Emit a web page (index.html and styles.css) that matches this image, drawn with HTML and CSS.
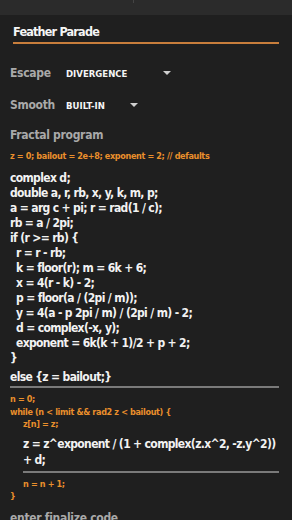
FILE: index.html
```html
<!DOCTYPE html>
<html>
<head>
<meta charset="utf-8">
<link rel="stylesheet" href="styles.css">
</head>
<body>
<div class="topbar"><span class="notch"></span></div>
<div class="page">
  <div class="title">Feather Parade</div>
  <div class="field escape">
    <span class="label">Escape</span>
    <span class="select sel-div">DIVERGENCE<span class="caret"></span></span>
  </div>
  <div class="field smooth">
    <span class="label">Smooth</span>
    <span class="select sel-bi">BUILT-IN<span class="caret"></span></span>
  </div>
  <div class="section">Fractal program</div>
  <div class="orange defaults">z = 0; bailout = 2e+8; exponent = 2; // defaults</div>
  <div class="code">
    <div class="ln">complex d;</div>
    <div class="ln">double a, r, rb, x, y, k, m, p;</div>
    <div class="ln">a = arg c + pi; r = rad(1 / c);</div>
    <div class="ln">rb = a / 2pi;</div>
    <div class="ln">if (r &gt;= rb) {</div>
    <div class="ln ind">r = r - rb;</div>
    <div class="ln ind">k = floor(r); m = 6k + 6;</div>
    <div class="ln ind">x = 4(r - k) - 2;</div>
    <div class="ln ind">p = floor(a / (2pi / m));</div>
    <div class="ln ind">y = 4(a - p 2pi / m) / (2pi / m) - 2;</div>
    <div class="ln ind">d = complex(-x, y);</div>
    <div class="ln ind">exponent = 6k(k + 1)/2 + p + 2;</div>
    <div class="ln">}</div>
    <div class="ln else">else {z = bailout;}</div>
  </div>
  <div class="loop">
    <div class="orange ol">n = 0;</div>
    <div class="orange ol">while (n &lt; limit &amp;&amp; rad2 z &lt; bailout) {</div>
    <div class="inner">
      <div class="orange ol">z[n] = z;</div>
      <div class="user">
        <div class="uln">z = z^exponent / (1 + complex(z.x^2, -z.y^2))</div>
        <div class="uln">+ d;</div>
      </div>
      <div class="orange ol inc">n = n + 1;</div>
    </div>
    <div class="orange ol">}</div>
  </div>
  <div class="section finalize">enter finalize code</div>
</div>
</body>
</html>
```
FILE: styles.css
```css
html, body {
  margin: 0;
  padding: 0;
  background: #1f1f1f;
  height: 100%;
  overflow: hidden;
}
body {
  font-family: "DejaVu Sans Condensed", "DejaVu Sans", sans-serif;
  font-weight: bold;
  color: #f2f2f2;
}
.topbar {
  height: 15px;
  background: #2b2b2b;
  position: relative;
}
.notch {
  position: absolute;
  left: 133px;
  top: 0;
  width: 1px;
  height: 3px;
  background: #444;
}
.page {
  padding: 0 13px 0 10px;
}
.title {
  margin: 9px 0 0 3px;
  font-size: 12.5px;
  letter-spacing: -0.8px;
  line-height: 16px;
  padding-bottom: 2px;
  border-bottom: 2px solid #c87e3c;
  color: #f5f5f5;
}
.field {
  display: flex;
  align-items: center;
  height: 20px;
}
.escape { margin-top: 19px; }
.smooth { margin-top: 12px; }
.label {
  width: 56px;
  font-size: 12px;
  letter-spacing: -0.3px;
  color: #a9a9a9;
}
.select {
  display: flex;
  align-items: center;
  font-size: 9.5px;
  color: #f5f5f5;
}
.sel-div .caret { margin-left: 36px; }
.sel-bi .caret { margin-left: 25px; }
.caret {
  width: 0;
  height: 0;
  border-left: 4px solid transparent;
  border-right: 4px solid transparent;
  border-top: 4px solid #cfcfcf;
}
.section {
  margin-top: 10px;
  height: 20px;
  line-height: 20px;
  font-size: 12px;
  letter-spacing: -0.3px;
  color: #a9a9a9;
}
.orange {
  color: #ea8f2c;
  font-size: 9px;
  letter-spacing: -0.35px;
}
.defaults {
  margin-top: 5px;
  line-height: 12px;
}
.code {
  margin-top: 9px;
  font-size: 12px;
  letter-spacing: -0.65px;
  line-height: 15px;
}
.ln { white-space: pre; }
.ind { padding-left: 6px; }
.else {
  margin-top: 4px;
  padding-bottom: 1px;
  border-bottom: 2px solid #7a7a7a;
}
.loop {
  margin-top: 5px;
}
.ol {
  line-height: 12.5px;
  white-space: pre;
}
.inner {
  padding-left: 13px;
}
.user {
  margin-top: 5px;
  font-size: 12px;
  letter-spacing: -0.65px;
  line-height: 16.5px;
  padding-bottom: 2px;
  border-bottom: 2px solid #7a7a7a;
}
.uln { white-space: pre; }
.inc {
  margin-top: 5px;
}
.section.finalize {
  margin-top: 5px;
}
```
